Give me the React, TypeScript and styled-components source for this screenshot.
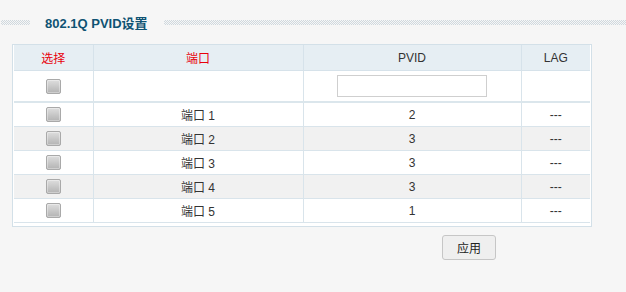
import React from "react";
import styled, { createGlobalStyle } from "styled-components";

const Global = createGlobalStyle`
  html, body { margin: 0; padding: 0; background: #f6f6f6; }
  body {
    font-family: "Liberation Sans", Arial, "Noto Sans CJK SC", sans-serif;
    font-size: 12px;
    color: #333;
  }
`;

const Page = styled.div`
  width: 626px;
  height: 292px;
  padding-top: 14px;
  box-sizing: border-box;
`;

const TitleBar = styled.div`
  display: flex;
  align-items: center;
  height: 17px;
  padding-left: 1px;
`;

const Dots = styled.div<{ $grow?: boolean }>`
  height: 5px;
  ${(p) => (p.$grow ? "flex: 1;" : "width: 29px;")}
  background: repeating-conic-gradient(#cfd8de 0 25%, transparent 0 50%) 0 0 / 2px 2px;
`;

const Title = styled.h2`
  margin: 0;
  padding: 0 16px 0 15px;
  font-size: 13px;
  font-weight: bold;
  color: #0f5373;
  white-space: nowrap;
`;

const Frame = styled.div`
  margin: 13px 0 0 12px;
  width: 580px;
  box-sizing: border-box;
  border: 1px solid #d3e0e8;
  padding: 0 1px 3px 1px;
  background: #fff;
`;

const Table = styled.table`
  width: 100%;
  border-collapse: collapse;
  table-layout: fixed;
`;

const Th = styled.th<{ $red?: boolean }>`
  height: 25px;
  padding: 0;
  background: #e6eef3;
  border-right: 1px solid #d6e2ea;
  border-bottom: 1px solid #d6e2ea;
  font-weight: normal;
  font-size: 12px;
  color: ${(p) => (p.$red ? "#e8000b" : "#333")};
  text-align: center;
  &:last-child { border-right: none; }
`;

const Tr = styled.tr<{ $alt?: boolean; $input?: boolean }>`
  background: ${(p) => (p.$alt ? "#f1f1f1" : "#fff")};
  & > td {
    height: ${(p) => (p.$input ? "30px" : "23px")};
    border-bottom: ${(p) => (p.$input ? "2px solid #dbe6ec" : "1px solid #d9e4eb")};
  }
`;

const Td = styled.td`
  padding: 0;
  text-align: center;
  border-right: 1px solid #d9e4eb;
  color: #333;
  &:last-child { border-right: none; }
`;

const Check = styled.span`
  display: inline-block;
  vertical-align: middle;
  width: 13px;
  height: 13px;
  border: 1px solid #a9a9a9;
  border-radius: 2px;
  background: linear-gradient(#dedede, #b3b3b3);
  box-shadow: inset 0 0 0 1px rgba(255, 255, 255, 0.35);
`;

const TextInput = styled.input`
  width: 150px;
  height: 22px;
  box-sizing: border-box;
  border: 1px solid #cfcfcf;
  background: #fff;
  padding: 0 4px;
  margin: 0;
  vertical-align: middle;
  outline: none;
`;

const Footer = styled.div`
  display: flex;
  padding: 8px 0 0 442px;
`;

const Button = styled.button`
  width: 54px;
  height: 25px;
  box-sizing: border-box;
  border: 1px solid #c6c6c6;
  border-radius: 3px;
  background: #efefef;
  font-family: "Liberation Sans", Arial, "Noto Sans CJK SC", sans-serif;
  font-size: 12px;
  color: #222;
  padding: 0;
  cursor: pointer;
`;

const rows = [
  { port: "端口 1", pvid: 2 },
  { port: "端口 2", pvid: 3 },
  { port: "端口 3", pvid: 3 },
  { port: "端口 4", pvid: 3 },
  { port: "端口 5", pvid: 1 },
];

export default function App() {
  return (
    <Page>
      <Global />
      <TitleBar>
        <Dots />
        <Title>802.1Q PVID设置</Title>
        <Dots $grow />
      </TitleBar>
      <Frame>
        <Table>
          <colgroup>
            <col style={{ width: 79 }} />
            <col style={{ width: 210 }} />
            <col style={{ width: 218 }} />
            <col />
          </colgroup>
          <thead>
            <tr>
              <Th $red>选择</Th>
              <Th $red>端口</Th>
              <Th>PVID</Th>
              <Th>LAG</Th>
            </tr>
          </thead>
          <tbody>
            <Tr $input>
              <Td>
                <Check />
              </Td>
              <Td />
              <Td>
                <TextInput type="text" />
              </Td>
              <Td />
            </Tr>
            {rows.map((r, i) => (
              <Tr key={r.port} $alt={i % 2 === 1}>
                <Td>
                  <Check />
                </Td>
                <Td>{r.port}</Td>
                <Td>{r.pvid}</Td>
                <Td>---</Td>
              </Tr>
            ))}
          </tbody>
        </Table>
      </Frame>
      <Footer>
        <Button>应用</Button>
      </Footer>
    </Page>
  );
}
